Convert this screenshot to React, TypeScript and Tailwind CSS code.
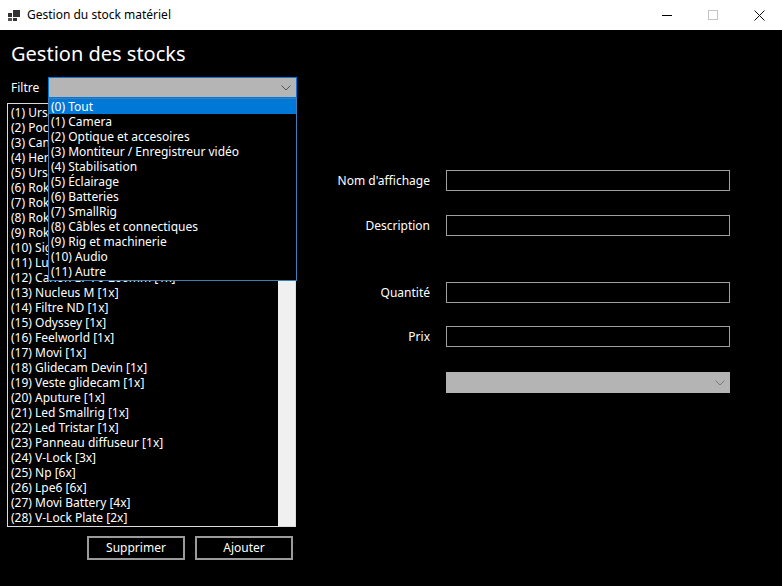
import React from "react";

const font = { fontFamily: '"Noto Sans", "Open Sans", sans-serif' };

const categories = [
  "(0) Tout",
  "(1) Camera",
  "(2) Optique et accesoires",
  "(3) Montiteur / Enregistreur vidéo",
  "(4) Stabilisation",
  "(5) Éclairage",
  "(6) Batteries",
  "(7) SmallRig",
  "(8) Câbles et connectiques",
  "(9) Rig et machinerie",
  "(10) Audio",
  "(11) Autre",
];

const items = [
  "(1) Ursa Mini Pro [1x]",
  "(2) Pocket 4K [1x]",
  "(3) Canon EF 24-70mm [1x]",
  "(4) Hero 8 [1x]",
  "(5) Ursa Viewfinder [1x]",
  "(6) Rokinon 24mm [1x]",
  "(7) Rokinon 35mm [1x]",
  "(8) Rokinon 50mm [1x]",
  "(9) Rokinon 85mm [1x]",
  "(10) Sigma 18-35mm [1x]",
  "(11) Lumix 12-35mm [1x]",
  "(12) Canon EF 70-200mm [1x]",
  "(13) Nucleus M [1x]",
  "(14) Filtre ND [1x]",
  "(15) Odyssey [1x]",
  "(16) Feelworld [1x]",
  "(17) Movi [1x]",
  "(18) Glidecam Devin [1x]",
  "(19) Veste glidecam [1x]",
  "(20) Aputure [1x]",
  "(21) Led Smallrig [1x]",
  "(22) Led Tristar [1x]",
  "(23) Panneau diffuseur [1x]",
  "(24) V-Lock [3x]",
  "(25) Np [6x]",
  "(26) Lpe6 [6x]",
  "(27) Movi Battery [4x]",
  "(28) V-Lock Plate [2x]",
];

function Chevron({ color }: { color: string }) {
  return (
    <svg width="10" height="6" viewBox="0 0 10 6">
      <path d="M0.5 0.5 L5 5 L9.5 0.5" fill="none" stroke={color} strokeWidth="1" />
    </svg>
  );
}

function TextBox() {
  return <div className="w-[284px] h-[21px] border border-[#a0a0a0] bg-black" />;
}

function FormRow({ label, mt }: { label: string; mt: string }) {
  return (
    <div className={`flex items-center ${mt}`}>
      <div className="w-[100px] text-right text-[12px] text-white">{label}</div>
      <div className="ml-[16px]">
        <TextBox />
      </div>
    </div>
  );
}

export default function App() {
  return (
    <div className="w-[782px] h-[586px] bg-black flex flex-col overflow-hidden" style={font}>
      {/* Title bar */}
      <div className="h-[30px] bg-white flex items-center shrink-0">
        <svg className="ml-[8px]" width="12" height="11" viewBox="0 0 12 11">
          <rect x="5" y="0" width="7" height="7" fill="#333" />
          <rect x="0" y="3" width="4" height="4" fill="#333" />
          <rect x="5" y="8" width="4" height="3" fill="#333" />
          <rect x="0" y="8" width="4" height="3" fill="#555" />
        </svg>
        <span className="ml-[7px] text-[12px] text-black">Gestion du stock matériel</span>
        <div className="flex-1" />
        <div className="w-[46px] h-[30px] flex items-center justify-center">
          <div className="w-[10px] h-px bg-black" />
        </div>
        <div className="w-[46px] h-[30px] flex items-center justify-center">
          <div className="w-[10px] h-[10px] border border-[#c4c4c4]" />
        </div>
        <div className="w-[46px] h-[30px] flex items-center justify-center">
          <svg width="11" height="11" viewBox="0 0 11 11">
            <path d="M0.5 0.5 L10.5 10.5 M10.5 0.5 L0.5 10.5" stroke="#111" strokeWidth="1" />
          </svg>
        </div>
      </div>

      {/* Content */}
      <div className="relative flex-1 text-white">
        <div className="pl-[11px] pt-[10px] h-[47px] text-[20px] leading-[28px]">Gestion des stocks</div>

        <div className="flex items-center h-[21px]">
          <div className="w-[48px] pl-[11px] text-[12px]">Filtre</div>
          <div className="w-[249px] h-[21px] bg-[#b5b5b5] border border-[#0078d7] flex items-center justify-end pr-[5px]">
            <Chevron color="#555" />
          </div>
        </div>

        <div className="flex mt-[5px]">
          {/* Left column */}
          <div className="ml-[7px] w-[289px] flex flex-col">
            <div className="h-[424px] border border-[#dcdcdc] bg-black flex">
              <div className="flex-1 flex flex-col pl-[3px] pt-[1px] overflow-hidden">
                {items.map((it) => (
                  <div key={it} className="h-[15px] leading-[15px] text-[12px] whitespace-nowrap">
                    {it}
                  </div>
                ))}
              </div>
              <div className="w-[17px] bg-[#f0f0f0]" />
            </div>
            <div className="flex gap-[10px] ml-[80px] mt-[9px]">
              <button className="w-[98px] h-[24px] border-2 border-[#9b9b9b] bg-black text-white text-[12px] flex items-center justify-center">
                Supprimer
              </button>
              <button className="w-[98px] h-[24px] border-2 border-[#9b9b9b] bg-black text-white text-[12px] flex items-center justify-center">
                Ajouter
              </button>
            </div>
          </div>

          {/* Right form */}
          <div className="ml-[34px] flex flex-col">
            <FormRow label="Nom d'affichage" mt="mt-[67px]" />
            <FormRow label="Description" mt="mt-[24px]" />
            <FormRow label="Quantité" mt="mt-[46px]" />
            <FormRow label="Prix" mt="mt-[23px]" />
            <div className="flex mt-[25px]">
              <div className="w-[116px]" />
              <div className="w-[284px] h-[21px] bg-[#b4b4b4] flex items-center justify-end pr-[5px]">
                <Chevron color="#777" />
              </div>
            </div>
          </div>
        </div>

        {/* Open dropdown */}
        <div className="absolute left-[48px] top-[68px] w-[249px] h-[183px] border border-[#3c7fb8] bg-black">
          {categories.map((c, i) => (
            <div
              key={c}
              className={`h-[15px] leading-[15px] text-[12px] pl-[2px] whitespace-nowrap ${i === 0 ? "bg-[#0078d7]" : ""}`}
            >
              {c}
            </div>
          ))}
        </div>
      </div>
    </div>
  );
}
